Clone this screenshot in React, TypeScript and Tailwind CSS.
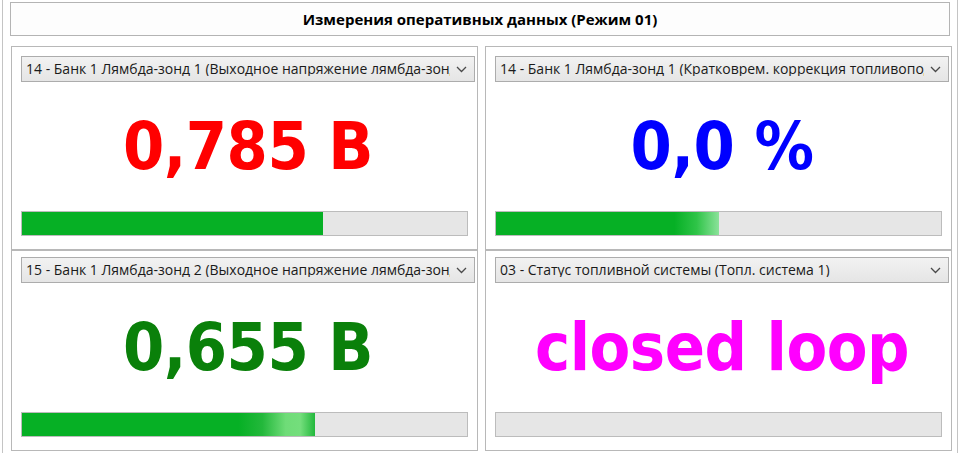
import React from 'react'

type Gauge = {
  label: string
  value: string
  color: string
  fill: number
  glow?: 'soft' | 'shine'
}

const ROW1: Gauge[] = [
  {
    label: '14 - Банк 1 Лямбда-зонд 1 (Выходное напряжение лямбда-зонда)',
    value: '0,785 В',
    color: 'text-[#ff0000]',
    fill: 67.7,
  },
  {
    label: '14 - Банк 1 Лямбда-зонд 1 (Кратковрем. коррекция топливоподачи)',
    value: '0,0 %',
    color: 'text-[#0000ff]',
    fill: 50.1,
    glow: 'soft',
  },
]

const ROW2: Gauge[] = [
  {
    label: '15 - Банк 1 Лямбда-зонд 2 (Выходное напряжение лямбда-зонда)',
    value: '0,655 В',
    color: 'text-[#0a800a]',
    fill: 65.9,
    glow: 'shine',
  },
  {
    label: '03 - Статус топливной системы (Топл. система 1)',
    value: 'closed loop',
    color: 'text-[#ff00ff]',
    fill: 0,
  },
]

function Chevron() {
  return (
    <svg width="11" height="7" viewBox="0 0 11 7" className="shrink-0">
      <polyline points="1,1 5.5,5.5 10,1" fill="none" stroke="#4a4a4a" strokeWidth="1.3" />
    </svg>
  )
}

function Select({ label }: { label: string }) {
  return (
    <div className="h-[26px] flex items-center border border-[#acacac] bg-gradient-to-b from-[#f2f2f2] to-[#e5e5e5] pl-[4px] pr-[7px] gap-[6px]">
      <span className="flex-1 overflow-hidden whitespace-nowrap text-[14px] text-[#1a1a1a] leading-none">
        {label}
      </span>
      <Chevron />
    </div>
  )
}

function Bar({ fill, glow }: { fill: number; glow?: Gauge['glow'] }) {
  const fillClass =
    glow === 'soft'
      ? 'bg-[linear-gradient(to_right,#06b025_0%,#06b025_80%,#2fc448_90%,#8be29a_100%)]'
      : glow === 'shine'
        ? 'bg-[linear-gradient(to_right,#06b025_0%,#06b025_74%,#23b83b_82%,#6fdc78_90%,#74de7c_95%,#22b83c_100%)]'
        : 'bg-[#06b025]'
  return (
    <div className="h-[25px] mr-[7px] border border-[#bcbcbc] bg-[#e6e6e6]">
      {fill > 0 && <div className={`h-full ${fillClass}`} style={{ width: `${fill}%` }} />}
    </div>
  )
}

function Panel({ g, top }: { g: Gauge; top: string }) {
  return (
    <div className={`flex flex-col border border-[#b8b8b8] pl-[9px] pr-[2px] pb-[13px] ${top}`}>
      <Select label={g.label} />
      <div className="flex-1 flex items-center justify-center">
        <span
          className={`font-['DejaVu_Sans_Condensed','DejaVu_Sans',sans-serif] font-stretch-condensed font-bold text-[66px] leading-none tracking-[-0.5px] ${g.color}`}
        >
          {g.value}
        </span>
      </div>
      <Bar fill={g.fill} glow={g.glow} />
    </div>
  )
}

export default function App() {
  return (
    <div className="w-[960px] h-[453px] bg-white overflow-hidden font-['Open_Sans',sans-serif]">
      <div className="mx-[2px] h-full border-x border-[#c4c4c4] pl-[8px] pr-[5px] pt-[2px]">
        <div className="h-[34px] -ml-px mr-[2px] border border-[#b4b4b4] bg-[#fdfdfd] flex items-center justify-center">
          <span className="text-[15px] font-bold text-black">Измерения оперативных данных (Режим 01)</span>
        </div>

        <div className="mt-[10px] grid grid-cols-2 gap-x-[7px] grid-rows-[204px_201px]">
          {ROW1.map((g) => (
            <Panel key={g.label} g={g} top="pt-[9px]" />
          ))}
          {ROW2.map((g) => (
            <Panel key={g.label} g={g} top="pt-[6px]" />
          ))}
        </div>
      </div>
    </div>
  )
}
